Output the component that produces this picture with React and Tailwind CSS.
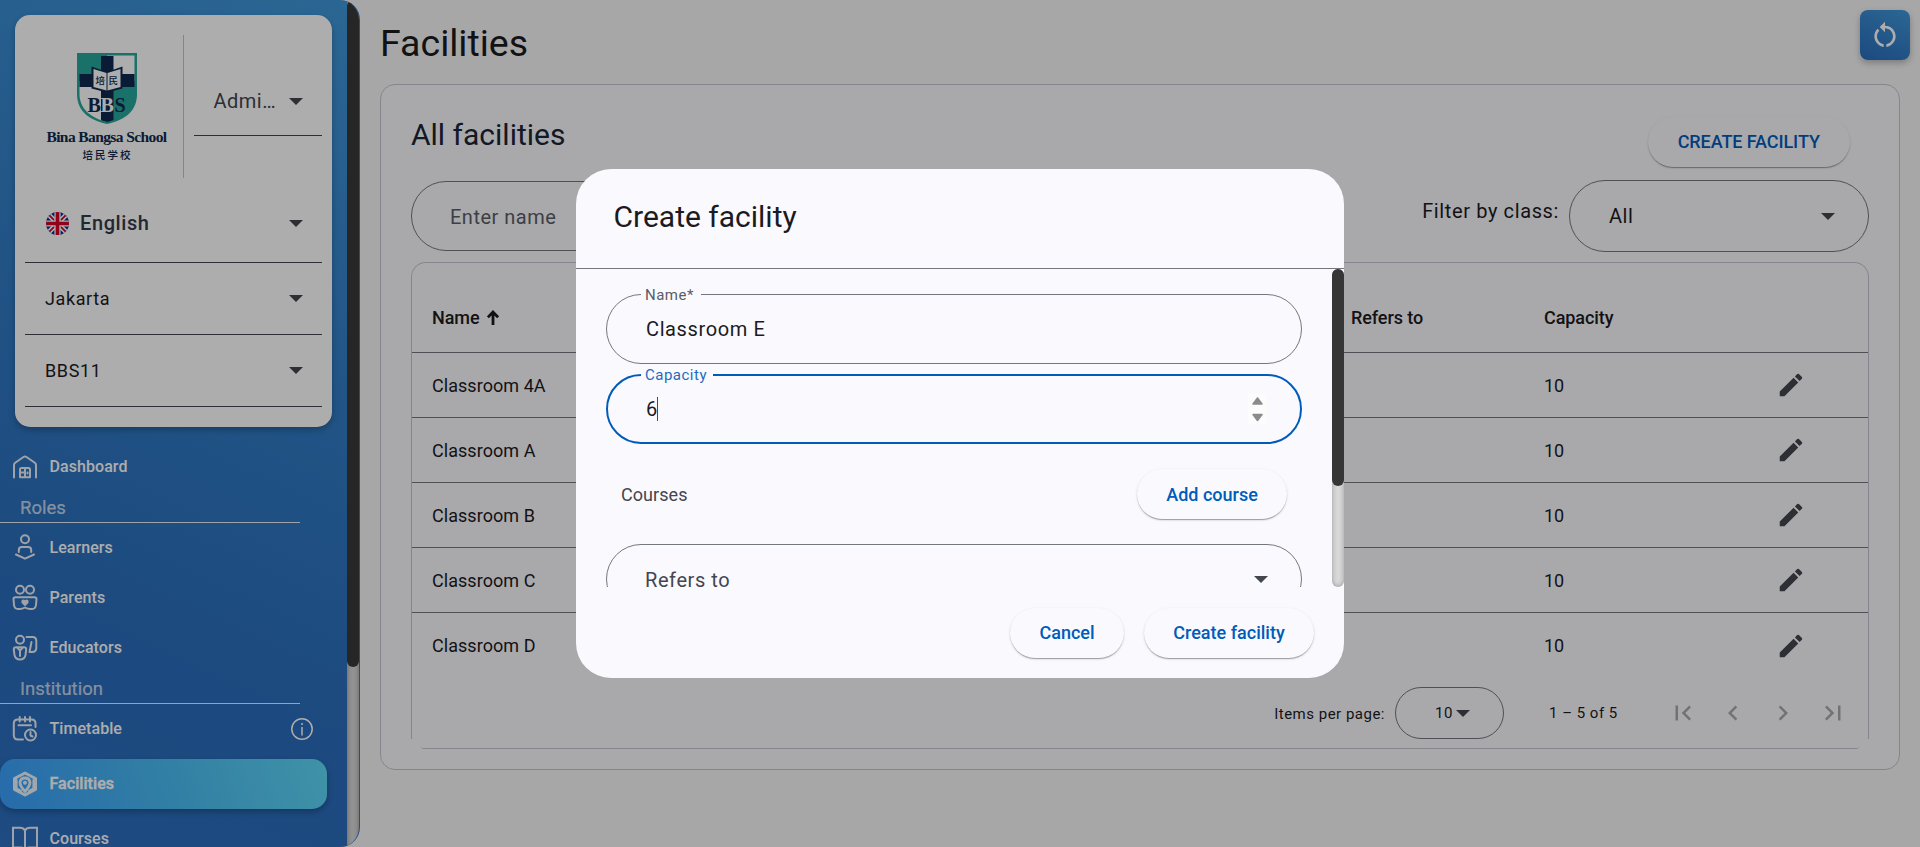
import React from "react";
import { MdRestartAlt, MdEdit, MdFirstPage, MdLastPage, MdChevronLeft, MdChevronRight } from "react-icons/md";

const ROWS = ["Classroom 4A", "Classroom A", "Classroom B", "Classroom C", "Classroom D"];
const SHADOW = "shadow-[0_2px_1px_-1px_rgba(0,0,0,0.2),0_1px_1px_0_rgba(0,0,0,0.14),0_1px_3px_0_rgba(0,0,0,0.12)]";

function Caret({ className = "" }) {
  return (
    <svg viewBox="0 0 14 7" className={`h-[7px] w-[14px] shrink-0 ${className}`}>
      <path d="M0 0H14L7 7Z" fill="#44464e" />
    </svg>
  );
}

function Crest() {
  return (
    <svg viewBox="0 0 60 71" className="h-[71px] w-[60px] shrink-0">
      <defs>
        <clipPath id="crest">
          <path d="M2.5 2.5H57.5V41C57.500 56 46 65 30 69C14 65 2.500 56 2.500 41Z" />
        </clipPath>
      </defs>
      <path d="M0 0H60V41C60 58 48 67 30 71C12 67 0 58 0 41Z" fill="#27a79b" />
      <g clipPath="url(#crest)">
        <path d="M0 0H30V28H0ZM30 28H60V71H30Z" fill="#27a79b" />
        <path d="M30 0H60V28H30ZM0 28H30V71H0Z" fill="#fff" />
        <path d="M24 3H36.500V71H24ZM0 21H60V34H0Z" fill="#0f2a4e" />
      </g>
      <path d="M14.500 13.500L30 19L45.500 13.500V35.500L30 39.500L14.500 35.500Z" fill="#0f2a4e" />
      <path d="M16.500 16L29.500 20V37.500L16.500 34ZM43.500 16L30.500 20V37.500L43.500 34Z" fill="#fff" />
      <g fill="#0f2a4e" fontFamily="Noto Sans CJK SC, sans-serif" fontSize="9.500" fontWeight="500">
        <text x="18.500" y="30.500">培</text>
        <text x="31.500" y="30.500">民</text>
      </g>
      <g fontFamily="Liberation Serif, serif" fontSize="20" fontWeight="700">
        <text x="10.500" y="58.500" fill="#0f2a4e">B</text>
        <text x="23.500" y="58.500" fill="#fff">B</text>
        <text x="37.500" y="58.500" fill="#0f2a4e">S</text>
      </g>
    </svg>
  );
}

function Flag() {
  return (
    <svg viewBox="0 0 24 24" className="ml-px h-[23px] w-[23px] shrink-0">
      <defs>
        <clipPath id="flag"><circle cx="12" cy="12" r="12" /></clipPath>
      </defs>
      <g clipPath="url(#flag)">
        <path d="M0 0H24V24H0Z" fill="#0d2f86" />
        <path d="M0 0L24 24M24 0L0 24" stroke="#fff" strokeWidth="5" />
        <path d="M0 0L24 24M24 0L0 24" stroke="#d80027" strokeWidth="1.800" />
        <path d="M12 0V24M0 12H24" stroke="#fff" strokeWidth="6.500" />
        <path d="M12 0V24M0 12H24" stroke="#d80027" strokeWidth="3.800" />
      </g>
    </svg>
  );
}

function NavIcon({ name }) {
  const p = { fill: "none", stroke: "currentColor", strokeWidth: 2, strokeLinecap: "round", strokeLinejoin: "round" };
  return (
    <svg viewBox="0 0 26 26" className="h-[26px] w-[26px] shrink-0 overflow-visible opacity-90" {...p}>
      {name === "Dashboard" && (
        <>
          <path d="M2 23.500V11C2 10 2.500 9.200 3.200 8.700L11.500 3Q13 2 14.500 3L22.800 8.700C23.500 9.200 24 10 24 11V23.500" />
          <path d="M8 23.300V15.500Q8 14 9.500 14H16.500Q18 14 18 15.500V23.300ZM13 14V23M8 18.500H13M15.500 18.500V19.500" />
        </>
      )}
      {name === "Learners" && (
        <>
          <circle cx="13" cy="4.300" r="4" />
          <path d="M6.800 17V15Q6.800 12 9.800 12H16.200Q19.200 12 19.200 15V17M4 19.500L13 23.700L22 19.500" />
        </>
      )}
      {name === "Parents" && (
        <>
          <circle cx="8" cy="4.800" r="4" />
          <circle cx="18" cy="4.800" r="4" />
          <path d="M1.500 14Q1.500 12.300 3.500 12.300H22.500Q24.500 12.300 24.500 14L24 20Q23.500 24 20 24Q16 24.500 13 22.500Q10 24.500 6 24Q2.500 24 2 20Z" />
          <path d="M13 20L10.500 17.500Q10 15.500 11.500 15.500Q12.500 15.500 13 16.500Q13.500 15.500 14.500 15.500Q16 15.500 15.500 17.500Z" fill="currentColor" />
        </>
      )}
      {name === "Educators" && (
        <>
          <circle cx="8" cy="4.800" r="4" />
          <path d="M1.800 14.500Q1.800 12.300 4 12.300H12Q14.200 12.300 14.200 14.500L13.500 20Q12.500 24.500 8 24.500Q3.500 24.500 2.500 20ZM5 12.500L8 15.500L11 12.500M8 16V21" />
          <path d="M14.500 2H20.500Q24.300 2 24.300 6V13Q24.300 17 20 17H17.500L19.500 7" />
        </>
      )}
      {name === "Timetable" && (
        <>
          <path d="M11 23.500H6Q1.800 23.500 1.800 19V7.500Q1.800 3.500 6 3.500H19.500Q23.500 3.500 23.500 7.500V11M7.700 1V5.500M13 1V5.500M18 1V5.500M6.500 9.300H19" />
          <circle cx="18.500" cy="19" r="5.500" />
          <path d="M18.500 16V19.500L20.500 20.500" />
        </>
      )}
      {name === "Facilities" && (
        <>
          <path d="M13 2L23.500 7.500V18.500L13 24L2.500 18.500V7.500Z" strokeWidth="3" />
          <path d="M13 20.500Q8 15 8 11.500Q8.500 7 13 7Q17.500 7 18 11.500Q18 15 13 20.500Z" strokeWidth="2.800" />
          <circle cx="13" cy="11.700" r="1" />
          <path d="M4.500 9V17.500L9 20M21.500 9V17.500L17 20" strokeWidth="2.200" />
        </>
      )}
      {name === "Courses" && (
        <path d="M13 4.500Q11.500 1.700 8 1.700H1V21.500H9Q12 21.500 13 24Q14 21.500 17 21.500H25V1.700H18Q14.500 1.700 13 4.500V24" strokeLinejoin="miter" />
      )}
    </svg>
  );
}

function NavItem({ name, info }) {
  return (
    <div className="flex h-[50px] w-[327px] shrink-0 items-center pl-3 text-[16px] font-medium tracking-[0.060px] text-white">
      <NavIcon name={name} />
      <span className="ml-[11.500px]">{name}</span>
      {info && (
        <svg viewBox="0 0 22 22" className="mr-3.5 ml-auto h-[22px] w-[22px]" fill="none" stroke="white" strokeWidth="1.500">
          <circle cx="11" cy="11" r="10.200" />
          <path d="M11 9V17.500M11 5V7" />
        </svg>
      )}
    </div>
  );
}

function NavHeading({ children }) {
  return (
    <div className="h-[31px] w-[300px] shrink-0 border-b border-white/90 pt-1 pl-5 text-[18.500px] leading-[25px] text-white/70 [-webkit-text-stroke:0.200px_rgba(255,255,255,0.700)]">{children}</div>
  );
}

function SidebarSelect({ children, className = "" }) {
  return (
    <div className={`flex items-center border-b border-[#44464e] pr-[19px] pl-5 ${className}`}>
      {children}
      <Caret className="ml-auto" />
    </div>
  );
}

function Sidebar() {
  return (
    <aside className="flex h-[847px] w-[360px] shrink-0 overflow-hidden rounded-r-[20px] border-r border-[#2f78c4] bg-[linear-gradient(205deg,#4098da_0%,#327dc6_40%,#2a6cbb_75%,#2b6fc0_100%)]">
      <div className="flex w-[347px] shrink-0 flex-col overflow-hidden">
        <div className="mt-[15px] ml-[15px] flex h-[412px] w-[317px] shrink-0 flex-col rounded-[15px] bg-white px-2.5 shadow-[0_3px_6px_rgba(0,0,0,0.25)]">
          <div className="flex h-[163px] pt-5">
            <div className="flex h-[143px] w-[159px] flex-col items-center border-r border-[#c4c4c8] pt-[17.500px] pl-[5px]">
              <Crest />
              <div className="mt-[2.500px] h-[22px] text-center font-['Liberation_Serif',serif] text-[15.500px] leading-[22px] font-bold tracking-[-0.600px] whitespace-nowrap text-[#0f2a4e]">Bina Bangsa School</div>
              <div className="mt-[1px] pl-[2px] text-[10.500px] leading-[14px] font-medium tracking-[2px] text-[#0f2a4e]">培民学校</div>
            </div>
            <div className="ml-2.5 flex h-[101px] w-[128px] items-center border-b border-[#44464e] pt-[32px] pr-[19px] pl-[19.500px] text-[20px] tracking-[0.500px] text-[#44464e]">
              <span>Admi…</span>
              <Caret className="ml-auto" />
            </div>
          </div>
          <SidebarSelect className="h-[85px] pt-[6px] text-[20px] font-medium tracking-[0.600px] text-[#343a4a]">
            <Flag />
            <span className="ml-[11px]">English</span>
          </SidebarSelect>
          <SidebarSelect className="h-[72px] text-[18px] tracking-[0.600px] text-[#1b1b1f]"><span>Jakarta</span></SidebarSelect>
          <SidebarSelect className="h-[72px] text-[18px] tracking-[0.600px] text-[#1b1b1f]"><span>BBS11</span></SidebarSelect>
        </div>
        <nav className="mt-[15px] flex flex-col">
          <NavItem name="Dashboard" />
          <NavHeading>Roles</NavHeading>
          <NavItem name="Learners" />
          <NavItem name="Parents" />
          <NavItem name="Educators" />
          <NavHeading>Institution</NavHeading>
          <NavItem name="Timetable" info />
          <div className="my-[5px] w-[327px] rounded-[15px] bg-[linear-gradient(70deg,#3a9efc_0%,#49bbf3_50%,#5ed8f8_100%)] shadow-[0_3px_6px_rgba(0,0,0,0.25)] [-webkit-text-stroke:0.400px_white]">
            <NavItem name="Facilities" />
          </div>
          <NavItem name="Courses" />
        </nav>
      </div>
      <div className="h-full w-3 shrink-0 bg-[#d8d8d8] shadow-[inset_0_0_5px_rgba(0,0,0,0.35)]">
        <div className="h-[667px] rounded-[6px] bg-[#383838]" />
      </div>
    </aside>
  );
}

function Paginator() {
  return (
    <div className="flex h-[72px] items-start justify-end text-[15px] tracking-[0.500px] text-[#1b1b1f]">
      <span className="mt-[26px] leading-5">Items per page:</span>
      <div className="mt-[9px] ml-[10px] flex h-[52px] w-[109px] items-center rounded-[26px] border border-[#75777f] pl-[39px]">
        <span>10</span>
        <Caret className="ml-[3px]" />
      </div>
      <span className="mt-[25px] ml-[45px] w-[71px] leading-5 whitespace-nowrap">1 – 5 of 5</span>
      <div className="mt-[20px] mr-[20px] ml-[48px] flex gap-5 text-[30px] text-[#a9a9ad]">
        <MdFirstPage />
        <MdChevronLeft />
        <MdChevronRight />
        <MdLastPage />
      </div>
    </div>
  );
}

function Main() {
  return (
    <main className="flex flex-1 flex-col pl-5">
      <div className="flex h-[84px] justify-between">
        <h1 className="mt-[20px] text-[37.500px] leading-[46px] text-[#1b1b1f]">Facilities</h1>
        <div className="mt-[10px] mr-2.5 flex h-[50px] w-[50px] items-center justify-center rounded-[8px] bg-[linear-gradient(205deg,#4098da,#2a6cbb)] text-[32px] text-white shadow-[0_3px_6px_rgba(0,0,0,0.25)]">
          <MdRestartAlt />
        </div>
      </div>
      <section className="mr-5 h-[686px] rounded-[15px] border border-[#c4c6d0] bg-[#faf9fd] px-[30px]">
        <div className="flex h-[95px] justify-between">
          <h2 className="mt-[30px] text-[30px] leading-[40px] text-[#1a2536]">All facilities</h2>
          <div className={`mt-[32px] mr-[19.500px] flex h-[50px] w-[201.500px] items-center justify-center rounded-full bg-[#faf9fd] pb-[2px] text-[18px] font-medium tracking-[-0.080px] text-[#005cbb] ${SHADOW}`}>CREATE FACILITY</div>
        </div>
        <div className="flex h-[82px]">
          <div className="mt-[1px] flex h-[70px] w-[400px] items-center rounded-full border border-[#75777f] pt-[2px] pl-[38px] text-[20px] tracking-[0.500px] text-[#5b5d66]">Enter name</div>
          <span className="mt-[18px] ml-auto text-[20px] leading-[26px] tracking-[0.620px] text-[#1b1b1f]">Filter by class:</span>
          <div className="ml-[10px] flex h-[72px] w-[300px] items-center rounded-full border border-[#75777f] pr-[33px] pl-[39px] text-[20px] tracking-[0.500px] text-[#1b1b1f]">
            <span>All</span>
            <Caret className="ml-auto" />
          </div>
        </div>
        <div className="rounded-t-[15px] border-x border-t border-[#c4c6d0] text-[18px] text-[#1b1b1f]">
          <div className="flex h-[90px] items-center border-b border-[#75777f] pt-[19px] pl-5 font-medium tracking-[-0.080px]">
            <span className="flex w-[919px] items-center">
              Name
              <svg viewBox="0 0 12 15" className="ml-2 h-[15px] w-3" fill="none" stroke="#1b1b1f" strokeWidth="2.800">
                <path d="M6 15V2.500M0.900 7.300L6 2L11.100 7.300" />
              </svg>
            </span>
            <span className="w-[193px]">Refers to</span>
            <span>Capacity</span>
          </div>
          {ROWS.map((r, i) => (
            <div key={r} className={`flex h-[65px] items-center pl-5 ${i < ROWS.length - 1 ? "border-b border-[#75777f]" : ""}`}>
              <span className="w-[1112px] tracking-[0.050px]">{r}</span>
              <span>10</span>
              <MdEdit className="mr-[62px] ml-auto text-[30px] text-[#44464e]" />
            </div>
          ))}
          <div className="h-[61px]"><Paginator /></div>
        </div>
        <div className="mx-[10px] h-[10px] rounded-b-[3px] border-b border-[#c4c6d0]" />
      </section>
    </main>
  );
}

function Outlined({ label, labelWidth, focused, children, className = "" }) {
  return (
    <fieldset className={`block h-[77px] w-[696px] min-w-0 rounded-[35px] px-[33px] ${focused ? "border-2 border-[#005cbb]" : "border border-[#75777f]"} ${className}`}>
      <legend className={`h-[15px] text-[15px] leading-[17px] tracking-[0.500px] whitespace-nowrap ${labelWidth} ${focused ? "text-[#1f6bc1]" : "ml-[1px] text-[#5b5d66]"} pl-1`}>{label}</legend>
      {children}
    </fieldset>
  );
}

function Button({ children, className = "" }) {
  return (
    <button className={`h-[50px] rounded-full bg-[#faf9fd] text-[18px] font-medium text-[#005cbb] ${SHADOW} ${className}`}>{children}</button>
  );
}

function Dialog() {
  return (
    <div className="flex h-[509px] w-[768px] flex-col overflow-hidden rounded-[35px] bg-[#faf9fe]">
      <h2 className="h-[100px] shrink-0 border-b border-[#75777f] pt-[28px] pl-[37.500px] text-[30px] leading-[40px] text-[#1b1b1f]">Create facility</h2>
      <div className="flex h-[318px] shrink-0 overflow-hidden">
        <div className="w-[756px] shrink-0 pt-[18px] pl-[30px]">
          <Outlined label="Name*" labelWidth="w-[60px]">
            <div className="mt-[14px] ml-[6px] text-[20px] leading-[26px] tracking-[0.620px] text-[#1b1b1f]">Classroom E</div>
          </Outlined>
          <Outlined label="Capacity" labelWidth="w-[72px]" focused className="mt-[3px]">
            <div className="mt-[12px] ml-[5px] flex h-[30px] items-center text-[20px] tracking-[0.500px] text-[#1b1b1f]">
              <span className="-mr-[1px]">6</span>
              <span className="h-6 w-px bg-[#005cbb]" />
              <svg viewBox="0 0 19 30" className="ml-auto h-[30px] w-[19px] bg-[#fcfcfc]">
                <path d="M5 10L9.500 4L14 10ZM5 20.500H14L9.500 26.500Z" fill="#8b8b8b" stroke="#8b8b8b" strokeWidth="1.500" strokeLinejoin="round" />
              </svg>
            </div>
          </Outlined>
          <div className="mt-[25px] flex h-[50px] items-center pr-[45px] pl-[15px] text-[18px] text-[#44464e]">
            <span className="tracking-[0.050px]">Courses</span>
            <Button className="ml-auto w-[150px]">Add course</Button>
          </div>
          <div className="mt-[25px] flex h-[70px] w-[696px] items-center rounded-full border border-[#75777f] pr-[33px] pl-[38px] text-[20px] tracking-[0.580px] text-[#44464e]">
            <span className="pt-[2px]">Refers to</span>
            <Caret className="ml-auto" />
          </div>
        </div>
        <div className="w-3 rounded-[6px] bg-[#d8d8d8] shadow-[inset_0_0_5px_rgba(0,0,0,0.3)]">
          <div className="h-[217px] rounded-[6px] bg-[#363636]" />
        </div>
      </div>
      <div className="flex justify-end gap-5 pt-[21px] pr-[30px]">
        <Button className="w-[114px] pb-[2px]">Cancel</Button>
        <Button className="w-[170px] pb-[2px]">Create facility</Button>
      </div>
    </div>
  );
}

export default function App() {
  return (
    <div className="relative flex h-[847px] w-[1920px] overflow-hidden bg-[#f6f6f6] font-[Roboto,'Noto_Sans_CJK_SC',sans-serif]">
      <Sidebar />
      <Main />
      <div className="absolute inset-0 flex items-center justify-center bg-black/32">
        <Dialog />
      </div>
    </div>
  );
}
